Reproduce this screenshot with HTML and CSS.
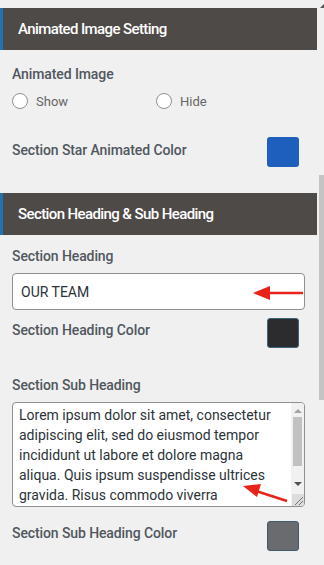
FILE: index.html
```html
<!DOCTYPE html>
<html>
<head>
<meta charset="utf-8">
<link rel="stylesheet" href="styles.css">
</head>
<body>
<div class="page">
  <div class="panel">
    <div class="section-head head-first">Animated Image Setting</div>
    <div class="label lbl-anim">Animated Image</div>
    <div class="radios">
      <label class="radio"><span class="dot"></span>Show</label>
      <label class="radio radio-hide"><span class="dot"></span>Hide</label>
    </div>
    <div class="row row-star">
      <div class="label">Section Star Animated Color</div>
      <div class="swatch sw-blue"></div>
    </div>

    <div class="section-head head-second">Section Heading &amp; Sub Heading</div>
    <div class="label lbl-heading">Section Heading</div>
    <div class="input">OUR TEAM</div>
    <div class="row row-hcolor">
      <div class="label">Section Heading Color</div>
      <div class="swatch sw-dark"></div>
    </div>
    <div class="label lbl-sub">Section Sub Heading</div>
    <div class="textarea">
      <div class="ta-text">Lorem ipsum dolor sit amet, consectetur adipiscing elit, sed do eiusmod tempor incididunt ut labore et dolore magna aliqua. Quis ipsum suspendisse ultrices gravida. Risus commodo viverra</div>
      <div class="ta-scroll">
        <span class="ta-up"></span>
        <span class="ta-thumb"></span>
        <span class="ta-down"></span>
        <span class="ta-fill"></span>
      </div>
      <svg class="ta-grip" width="12" height="12" viewBox="0 0 12 12"><path d="M3 11 L11 3 M7 11 L11 7" stroke="#777" stroke-width="1"/></svg>
    </div>
    <div class="row row-scolor">
      <div class="label">Section Sub Heading Color</div>
      <div class="swatch sw-gray"></div>
    </div>
  </div>
  <div class="vscroll">
    <span class="vs-arrow"></span>
    <span class="vs-thumb"></span>
  </div>
  <svg class="annot" width="324" height="565" viewBox="0 0 324 565">
    <line x1="303" y1="293" x2="266" y2="293" stroke="#e8231a" stroke-width="2.5"/>
    <polygon points="253,293 270,286 270,300" fill="#e8231a"/>
    <line x1="287" y1="501" x2="256" y2="491" stroke="#e8231a" stroke-width="2.5"/>
    <polygon points="243,486 261,484 257,497" fill="#e8231a"/>
  </svg>
</div>
</body>
</html>
```

FILE: styles.css
```css
* { box-sizing: border-box; }
html, body { margin: 0; padding: 0; }
body {
  background: #f0f0f0;
  font-family: Roboto, "Liberation Sans", Arial, sans-serif;
  width: 324px;
  height: 565px;
  overflow: hidden;
}
.page {
  position: relative;
  display: flex;
  width: 324px;
  height: 565px;
}
.panel {
  width: 317px;
  display: flex;
  flex-direction: column;
}
.section-head {
  height: 42px;
  background: #4e4a48;
  border-left: 3px solid #2271b1;
  color: #fff;
  font-size: 15px;
  font-weight: 500;
  letter-spacing: -0.6px;
  padding-left: 15px;
  display: flex;
  align-items: center;
}
.head-first { margin-top: 8px; }
.head-second { margin-top: 26px; }
.label {
  font-size: 14px;
  font-weight: 500;
  color: #50575e;
  line-height: 20px;
  padding-left: 12px;
  letter-spacing: -0.1px;
}
.lbl-anim { margin-top: 14px; }
.radios {
  display: flex;
  margin-top: 8px;
  height: 18px;
  align-items: center;
  padding-left: 12px;
}
.radio {
  display: flex;
  align-items: center;
  font-size: 13px;
  color: #666;
  width: 144px;
}
.radio-hide { width: auto; }
.dot {
  width: 16px;
  height: 16px;
  border: 1px solid #8c8f94;
  border-radius: 50%;
  background: #fff;
  margin-right: 8px;
}
.row {
  display: flex;
  justify-content: space-between;
  align-items: flex-start;
  padding-right: 18px;
}
.row .label { padding-top: 3px; }
.row-star { margin-top: 27px; }
.row-hcolor { margin-top: 8px; }
.row-hcolor .label, .row-scolor .label { padding-top: 2px; }
.row-scolor { margin-top: 14px; }
.swatch {
  width: 32px;
  height: 30px;
  border-radius: 3px;
}
.sw-blue { background: #1e5fbd; }
.sw-dark { background: #2c2c2e; border: 1px solid #3d6478; }
.sw-gray { background: #6a6b6e; border: 1px solid #3c5a6e; }
.lbl-heading { margin-top: 11px; }
.input {
  margin: 7px 12px 0 12px;
  height: 37px;
  background: #fff;
  border: 1px solid #8c8f94;
  border-radius: 4px;
  font-size: 14px;
  color: #2c3338;
  padding-left: 8px;
  display: flex;
  align-items: center;
}
.lbl-sub { margin-top: 27px; }
.textarea {
  position: relative;
  margin: 7px 12px 0 12px;
  height: 105px;
  background: #fff;
  border: 1px solid #8c8f94;
  border-radius: 4px;
  display: flex;
  overflow: hidden;
}
.ta-text {
  flex: 1;
  font-size: 14px;
  line-height: 20px;
  color: #2c3338;
  padding: 2px 4px 0 6px;
}
.ta-scroll {
  width: 13px;
  display: flex;
  flex-direction: column;
  align-items: center;
  background: #f1f1f1;
}
.ta-up {
  margin-top: 6px;
  width: 0; height: 0;
  border-left: 4px solid transparent;
  border-right: 4px solid transparent;
  border-bottom: 4px solid #a3a3a3;
}
.ta-thumb {
  margin-top: 4px;
  width: 9px;
  height: 49px;
  background: #c1c1c1;
}
.ta-down {
  margin-top: 16px;
  width: 0; height: 0;
  border-left: 4px solid transparent;
  border-right: 4px solid transparent;
  border-top: 4px solid #505050;
}
.ta-fill { flex: 1; }
.ta-grip {
  position: absolute;
  right: 0;
  bottom: 0;
  background: #dcdcdc;
}
.vscroll {
  width: 7px;
  display: flex;
  flex-direction: column;
  align-items: flex-end;
}
.vs-arrow {
  margin-top: 4px;
  width: 0; height: 0;
  border-left: 4px solid transparent;
  border-bottom: 4px solid #555;
}
.vs-thumb {
  margin-top: 167px;
  width: 5px;
  height: 225px;
  background: #c4c4c4;
}
.annot {
  position: absolute;
  left: 0;
  top: 0;
  pointer-events: none;
}
```
